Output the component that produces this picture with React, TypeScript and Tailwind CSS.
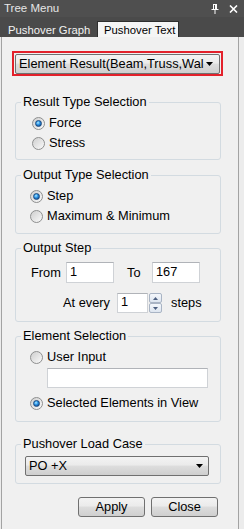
import React from "react";

const F = "font-['Liberation_Sans',Arial,sans-serif]";

function Radio({ checked, label }: { checked?: boolean; label: string }) {
  return (
    <div className="flex items-center h-[20px]">
      <span className="w-[13px] h-[13px] shrink-0 rounded-full border border-[#8e8f8f] bg-[linear-gradient(135deg,#cfcfcf,#fbfbfb)] flex items-center justify-center">
        {checked ? (
          <span className="w-[7px] h-[7px] rounded-full border border-[#1c4a7e] bg-[radial-gradient(circle_at_40%_35%,#b6ecff_0%,#3aa2ee_35%,#125aa8_75%,#0b3a70_100%)]" />
        ) : (
          <span className="w-[9px] h-[9px] rounded-full bg-[linear-gradient(135deg,#d2d2d2,#f6f6f6)]" />
        )}
      </span>
      <span className="ml-[4px] leading-[14px]">{label}</span>
    </div>
  );
}

function Arrow() {
  return (
    <svg width="7" height="4" viewBox="0 0 7 4" className="shrink-0 ml-auto">
      <polygon points="0,0 7,0 3.5,4" fill="#000" />
    </svg>
  );
}

function Combo({ text, className }: { text: string; className?: string }) {
  return (
    <div
      className={
        "h-[20px] border border-[#707070] rounded-[2px] bg-[linear-gradient(#f3f3f3,#ebebeb_45%,#dddddd_50%,#cfcfcf)] flex items-center " +
        (className ?? "")
      }
    >
      <span className="whitespace-nowrap leading-[14px]">{text}</span>
      <Arrow />
    </div>
  );
}

function TextBox({ value, className }: { value?: string; className: string }) {
  return (
    <div
      className={
        "bg-white border border-[#cfd2d6] border-t-[#b0b3b8] flex items-center pl-[3px] pb-[2px] leading-[14px] " +
        className
      }
    >
      {value}
    </div>
  );
}

function Group({
  title,
  className,
  children,
}: {
  title: string;
  className?: string;
  children: React.ReactNode;
}) {
  return (
    <fieldset
      className={
        "ml-[13px] w-[206px] border border-[#d3dbe1] rounded-[3px] " + (className ?? "")
      }
    >
      <legend className="ml-[5px] px-[2px] leading-[14px]">{title}</legend>
      {children}
    </fieldset>
  );
}

function Button({ label }: { label: string }) {
  return (
    <div className="w-[67px] h-[20px] border border-[#707070] rounded-[3px] bg-[linear-gradient(#f3f3f3,#ebebeb_45%,#dddddd_50%,#cfcfcf)] flex items-center justify-center leading-[14px]">
      {label}
    </div>
  );
}

export default function App() {
  return (
    <div className={"w-[244px] h-[529px] flex flex-col bg-[#4f4f4f] overflow-hidden text-black text-[12.8px] " + F}>
      {/* title bar */}
      <div className="h-[17px] flex items-center pl-[4px] pr-[6px] text-[#e6e6e6] text-[11.5px]">
        <span className="flex-1 leading-[15px]">Tree Menu</span>
        <svg width="8" height="10" viewBox="0 0 8 10" className="mr-[10px]">
          <path d="M2 0.5 H6 M2.5 0.5 V5 M5.5 0.5 V5 M0.5 5.5 H7.5 M4 5.5 V10" stroke="#ffffff" strokeWidth="1" fill="none" />
          <rect x="4" y="1" width="1.5" height="4" fill="#ffffff" />
        </svg>
        <svg width="9" height="8" viewBox="0 0 9 8">
          <path d="M1 0.5 L8 7.5 M8 0.5 L1 7.5" stroke="#ffffff" strokeWidth="1.6" />
        </svg>
      </div>
      {/* tabs */}
      <div className="h-[20px] flex items-end pl-[2px] bg-[#4a4a4a] text-[11.3px]">
        <div className="w-[95px] h-[15px] flex items-center pl-[6px] text-[#f2f2f2] leading-[14px] whitespace-nowrap">
          Pushover Graph
        </div>
        <div className="w-[82px] h-[16px] flex items-center pl-[6px] bg-[#f5f5f5] border border-b-0 border-[#2e2e2e] text-black leading-[14px] whitespace-nowrap">
          Pushover Text
        </div>
      </div>
      {/* content */}
      <div className="flex-1 flex bg-[#ececec]">
        <div className="ml-px w-[238px] border-x border-[#a3a3a3] bg-[#f0f0f0] flex flex-col">
          <div className="ml-[10px] mt-[14px] w-[211px] h-[25px] border-2 border-[#e3212b] p-[1px]">
            <Combo text="Element Result(Beam,Truss,Wal" className="h-[19px] pl-[3px] pr-[6px]" />
          </div>

          <Group title="Result Type Selection" className="mt-[19px]">
            <div className="pl-[16px] pt-[4px] pb-[6px]">
              <Radio checked label="Force" />
              <Radio label="Stress" />
            </div>
          </Group>

          <Group title="Output Type Selection" className="mt-[8px]">
            <div className="pl-[14px] pt-[4px] pb-[7px]">
              <Radio checked label="Step" />
              <Radio label="Maximum & Minimum" />
            </div>
          </Group>

          <Group title="Output Step" className="mt-[7px]">
            <div className="pt-[7px] pb-[8px]">
              <div className="flex items-center pl-[15px]">
                <span className="w-[35px]">From</span>
                <TextBox value="1" className="w-[48px] h-[21px]" />
                <span className="w-[38px] pl-[13px]">To</span>
                <TextBox value="167" className="w-[48px] h-[21px]" />
              </div>
              <div className="flex items-center pl-[47px] mt-[10px]">
                <span className="w-[54px]">At every</span>
                <TextBox value="1" className="w-[31px] h-[20px]" />
                <div className="flex flex-col w-[13px] h-[20px] ml-[1px]">
                  <div className="flex-1 border border-[#a9b4c4] rounded-[2px] bg-[linear-gradient(#f4f7fb,#dde5ef)] flex items-center justify-center">
                    <svg width="5" height="3" viewBox="0 0 5 3"><polygon points="0,3 5,3 2.5,0" fill="#4c5f80" /></svg>
                  </div>
                  <div className="flex-1 border border-[#a9b4c4] rounded-[2px] bg-[linear-gradient(#f4f7fb,#dde5ef)] flex items-center justify-center">
                    <svg width="5" height="3" viewBox="0 0 5 3"><polygon points="0,0 5,0 2.5,3" fill="#4c5f80" /></svg>
                  </div>
                </div>
                <span className="ml-[9px]">steps</span>
              </div>
            </div>
          </Group>

          <Group title="Element Selection" className="mt-[7px]">
            <div className="pl-[14px] pt-[4px] pb-[8px]">
              <Radio label="User Input" />
              <TextBox className="ml-[17px] mt-[1px] w-[161px] h-[20px]" />
              <div className="mt-[5px]">
                <Radio checked label="Selected Elements in View" />
              </div>
            </div>
          </Group>

          <Group title="Pushover Load Case" className="mt-[15px]">
            <div className="pl-[9px] pt-[5px] pb-[7px]">
              <Combo text="PO +X" className="w-[184px] pl-[3px] pr-[5px]" />
            </div>
          </Group>

          <div className="flex mt-[13px] ml-[76px] gap-[6px]">
            <Button label="Apply" />
            <Button label="Close" />
          </div>
        </div>
      </div>
    </div>
  );
}
